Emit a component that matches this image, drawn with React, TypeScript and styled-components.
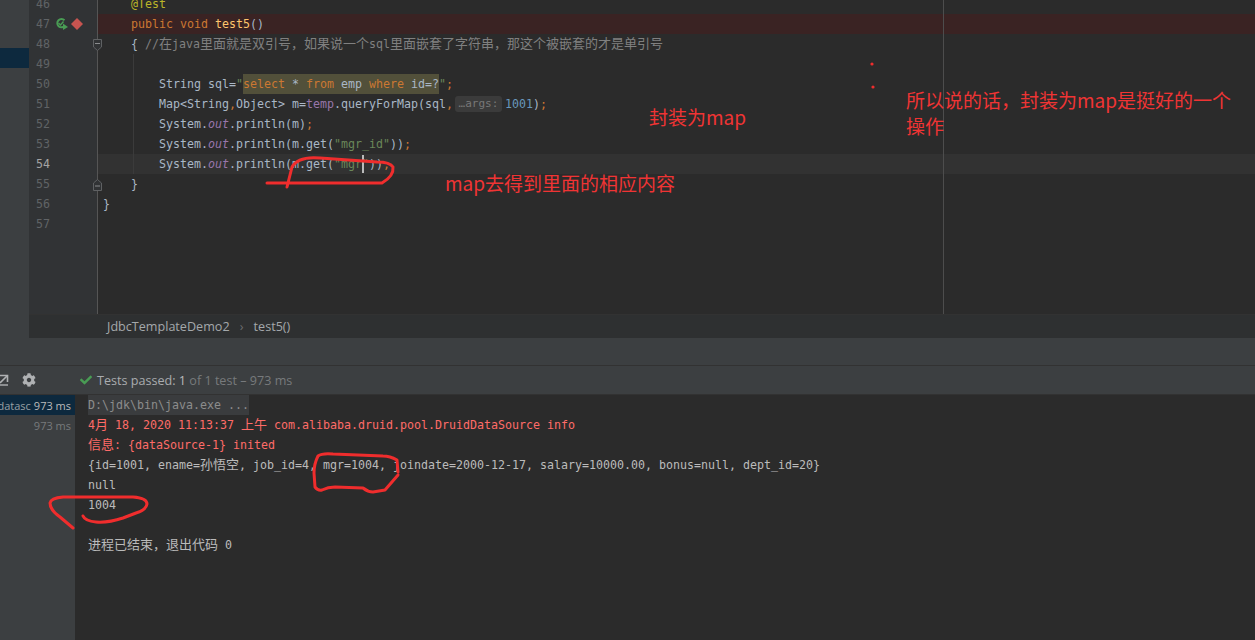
import React, { FC, ReactNode } from 'react'
import styled, { createGlobalStyle } from 'styled-components'
import { FaCheck as CheckIcon, FaCog as GearIcon } from 'react-icons/fa'

const GlobalStyle = createGlobalStyle`
	html, body {
		margin: 0;
		padding: 0;
		background: #2b2b2b;
	}
`

const App: FC = () => {
	return (
		<Page>
			<GlobalStyle />
			<TopArea>
				<LeftRail>
					<RailSelection />
				</LeftRail>
				<EditorColumn>
					<EditorBody>
						<Gutter>
							{lineNumbers.map((n) => (
								<GutterRow key={n}>
									<LineNumber $current={n === 54}>{n}</LineNumber>
									{n === 47 && <RunMarker />}
									{(n === 48 || n === 55) && <FoldMark open={n === 48} />}
								</GutterRow>
							))}
						</Gutter>
						<Code>
							<RightMargin />
							<IndentGuide />
							<CodeLine>
								<Indent $level={1}><Annotation>@Test</Annotation></Indent>
							</CodeLine>
							<CodeLine $tone="breakpoint">
								<Indent $level={1}>
									<Keyword>public void </Keyword>
									<Method>test5</Method>()
								</Indent>
							</CodeLine>
							<CodeLine>
								<Indent $level={1}>
									{'{ '}
									<Comment>
										//<Han>在</Han>java<Han>里面就是双引号，如果说一个</Han>sql
										<Han>里面嵌套了字符串，那这个被嵌套的才是单引号</Han>
									</Comment>
								</Indent>
							</CodeLine>
							<CodeLine />
							<CodeLine>
								<Indent $level={2}>
									String sql=<Str>"</Str>
									<SqlHighlight>
										<Keyword>select</Keyword> * <Keyword>from</Keyword> emp{' '}
										<Keyword>where</Keyword> id=?
									</SqlHighlight>
									<Str>"</Str>
									<Keyword>;</Keyword>
								</Indent>
							</CodeLine>
							<CodeLine>
								<Indent $level={2}>
									Map{'<'}String<Keyword>,</Keyword>Object{'>'} m=<Field>temp</Field>
									.queryForMap(sql<Keyword>,</Keyword>
									<ParamHint>…args:</ParamHint>
									<NumberLit>1001</NumberLit>)<Keyword>;</Keyword>
								</Indent>
							</CodeLine>
							<CodeLine>
								<Indent $level={2}>
									System.<StaticField>out</StaticField>.println(m)<Keyword>;</Keyword>
								</Indent>
							</CodeLine>
							<CodeLine>
								<Indent $level={2}>
									System.<StaticField>out</StaticField>.println(m.get(
									<Str>"mgr_id"</Str>))<Keyword>;</Keyword>
								</Indent>
							</CodeLine>
							<CodeLine $tone="current">
								<Indent $level={2}>
									System.<StaticField>out</StaticField>.println(m.get(
									<Str>"mgr</Str>
									<Caret />
									<Str>"</Str>))<Keyword>;</Keyword>
								</Indent>
							</CodeLine>
							<CodeLine>
								<Indent $level={1}>{'}'}</Indent>
							</CodeLine>
							<CodeLine>
								<Indent $level={0}>{'}'}</Indent>
							</CodeLine>
							<CodeLine />
						</Code>
					</EditorBody>
					<Breadcrumbs>
						<span>JdbcTemplateDemo2</span>
						<CrumbArrow>›</CrumbArrow>
						<span>test5()</span>
					</Breadcrumbs>
				</EditorColumn>
			</TopArea>
			<ToolWindowHeader />
			<RunToolbar>
				<ToolIcons>
					<ExpandIcon />
					<GearSlot>
						<GearIcon size={14} color="#afb1b3" />
					</GearSlot>
				</ToolIcons>
				<TestStatus>
					<CheckIcon size={12} color="#499c54" />
					<StatusText>
						Tests passed: <strong>1</strong> <Dim>of 1 test – 973 ms</Dim>
					</StatusText>
				</TestStatus>
			</RunToolbar>
			<RunBody>
				<TestTree>
					<TreeRow $selected>
						<TreeName>datasc</TreeName>
						<span>973 ms</span>
					</TreeRow>
					<TreeRow>
						<Dim>973 ms</Dim>
					</TreeRow>
				</TestTree>
				<Console>
					<ConsoleLine>
						<CommandText>D:\jdk\bin\java.exe ...</CommandText>
					</ConsoleLine>
					<ConsoleLine $error>
						4<Han>月</Han> 18, 2020 11:13:37 <Han>上午</Han> com.alibaba.druid.pool.DruidDataSource info
					</ConsoleLine>
					<ConsoleLine $error>
						<Han>信息</Han>: {'{'}dataSource-1{'}'} inited
					</ConsoleLine>
					<ConsoleLine>
						{'{'}id=1001, ename=<Han>孙悟空</Han>, job_id=4, mgr=1004, joindate=2000-12-17,
						salary=10000.00, bonus=null, dept_id=20{'}'}
					</ConsoleLine>
					<ConsoleLine>null</ConsoleLine>
					<ConsoleLine>1004</ConsoleLine>
					<ConsoleLine />
					<ConsoleLine>
						<Han>进程已结束，退出代码</Han> 0
					</ConsoleLine>
				</Console>
			</RunBody>
			<Scribbles viewBox="0 0 1255 640">
				<path d="M267 183 L382 183 Q394 176 393 167 Q390 162 377 162 L320 158 Q298 156 292 167 L287 187" />
				<path d="M398 472 L397 460 Q390 456 383 456 L333 454 Q322 453 318 456 Q314 464 314 473 L315 487 Q318 491 322 490 Q328 487 335 487 L363 488 Q368 492 373 492 L385 490 L398 475" />
				<path d="M73 528 L60 517 Q50 510 50 503 Q51 498 63 497 L100 497 L133 497 Q147 498 147 504 Q146 510 136 513 L123 518 Q108 523 96 522 Q85 521 83 516" />
				<Dot cx="872" cy="64" r="1.6" />
				<Dot cx="873" cy="87" r="1.6" />
			</Scribbles>
			<Note $x={649} $y={104}>封装为map</Note>
			<Note $x={445} $y={170}>map去得到里面的相应内容</Note>
			<Note $x={906} $y={87} $width={340}>
				所以说的话，封装为map是挺好的一个
				<br />
				操作
			</Note>
		</Page>
	)
}

export default App

const lineNumbers = [46, 47, 48, 49, 50, 51, 52, 53, 54, 55, 56, 57]

const RunMarker: FC = () => (
	<MarkerSlot>
		<svg width="28" height="14" viewBox="0 0 28 14">
			<path d="M9.5 3.2 A4.2 4.2 0 1 0 9.6 9" fill="none" stroke="#499c54" strokeWidth="2" />
			<path d="M3.5 6 L5.5 8 L8.5 4.5" fill="none" stroke="#499c54" strokeWidth="1.4" />
			<path d="M8 6.5 L13 10 L8 13 Z" fill="#499c54" />
			<path d="M22 1 L28 7 L22 13 L16 7 Z" fill="#c75450" />
		</svg>
	</MarkerSlot>
)

const FoldMark: FC<{ open: boolean }> = ({ open }) => (
	<FoldSlot>
		<svg width="9" height="12" viewBox="0 0 9 12">
			<path
				d={open ? 'M0.5 0.5 H8.5 V8 L4.5 11.5 L0.5 8 Z' : 'M0.5 11.5 H8.5 V4 L4.5 0.5 L0.5 4 Z'}
				fill="#313335"
				stroke="#5f6163"
			/>
			<path d={open ? 'M2 4.5 H7' : 'M2 7 H7'} stroke="#8a8c8e" />
		</svg>
	</FoldSlot>
)

const ExpandIcon: FC = () => (
	<ExpandSlot>
		<svg width="9" height="12" viewBox="0 0 9 12">
			<path d="M0 1.5 H7.5 V8" fill="none" stroke="#afb1b3" strokeWidth="1.6" />
			<path d="M7 2 L0 9" fill="none" stroke="#afb1b3" strokeWidth="1.6" />
			<path d="M0 11 H8" fill="none" stroke="#afb1b3" strokeWidth="1.4" />
		</svg>
	</ExpandSlot>
)

const mono = `"DejaVu Sans Mono", "Noto Sans CJK SC", monospace`
const ui = `"Open Sans", "Liberation Sans", sans-serif`

const Page = styled.div`
	position: relative;
	display: flex;
	flex-direction: column;
	width: 1255px;
	height: 640px;
	overflow: hidden;
	background: #2b2b2b;
	color: #a9b7c6;
	font-family: ${mono};
	font-size: 11.63px;
`

const TopArea = styled.div`
	display: flex;
	height: 338px;
`

const LeftRail = styled.div`
	flex: 0 0 29px;
	padding-top: 48px;
	background: #3c3f41;
`

const RailSelection = styled.div`
	height: 20px;
	background: #0d293e;
`

const EditorColumn = styled.div`
	flex: 1;
	display: flex;
	flex-direction: column;
	min-width: 0;
`

const EditorBody = styled.div`
	flex: 0 0 314px;
	display: flex;
	overflow: hidden;
`

const Gutter = styled.div`
	flex: 0 0 69px;
	background: #313335;
	border-right: 1px solid #555555;
	box-sizing: border-box;
`

const GutterRow = styled.div`
	position: relative;
	top: -6px;
	display: flex;
	align-items: center;
	height: 20px;
	padding-left: 7px;
`

const LineNumber = styled.span<{ $current?: boolean }>`
	width: 14px;
	text-align: right;
	color: ${({ $current }) => ($current ? '#a4a3a3' : '#606366')};
`

const MarkerSlot = styled.span`
	display: flex;
	margin-left: 5px;
`

const FoldSlot = styled.span`
	position: absolute;
	right: -5px;
	top: 5px;
	z-index: 2;
	display: flex;
`

const Code = styled.div`
	position: relative;
	flex: 1;
	min-width: 0;
	margin-top: -6px;
`

const RightMargin = styled.div`
	position: absolute;
	left: 845px;
	top: 0;
	bottom: -6px;
	width: 1px;
	background: #4d4d4d;
`

const IndentGuide = styled.div`
	position: absolute;
	left: 35px;
	top: 60px;
	height: 120px;
	width: 1px;
	background: #3b3b3b;
`

const CodeLine = styled.div<{ $tone?: 'breakpoint' | 'current' }>`
	height: 20px;
	line-height: 20px;
	white-space: pre;
	background: ${({ $tone }) =>
		$tone === 'breakpoint' ? '#3a2323' : $tone === 'current' ? '#323232' : 'transparent'};
`

const Indent = styled.div<{ $level: number }>`
	padding-left: ${({ $level }) => 5 + $level * 28}px;
`

const Keyword = styled.span`
	color: #cc7832;
`

const Method = styled.span`
	color: #ffc66d;
`

const Annotation = styled.span`
	color: #bbb529;
`

const Comment = styled.span`
	color: #808080;
`

const Han = styled.span`
	font-family: "Noto Sans CJK SC", sans-serif;
	font-size: 13px;
	line-height: 0;
`

const Str = styled.span`
	color: #6a8759;
`

const SqlHighlight = styled.span`
	display: inline-block;
	height: 20px;
	background: #52503a;
`

const Field = styled.span`
	color: #9876aa;
`

const StaticField = styled.span`
	color: #9876aa;
	font-style: italic;
`

const NumberLit = styled.span`
	color: #6897bb;
`

const ParamHint = styled.span`
	display: inline-block;
	height: 16px;
	line-height: 15px;
	width: 47px;
	margin: 0 3px 0 2px;
	border-radius: 3px;
	background: #3b3b3b;
	color: #787878;
	font-size: 11px;
	text-align: center;
	vertical-align: 1px;
`

const Caret = styled.span`
	display: inline-block;
	width: 2px;
	height: 18px;
	margin-right: -2px;
	background: #bbbbbb;
	vertical-align: -5px;
`

const Breadcrumbs = styled.div`
	flex: 1;
	display: flex;
	align-items: center;
	padding-left: 78px;
	background: #2e3031;
	border-top: 1px solid #323232;
	color: #a4a8ab;
	font-family: ${ui};
	font-size: 12.6px;
`

const CrumbArrow = styled.span`
	width: 24px;
	text-align: center;
	color: #6b6d6f;
`

const ToolWindowHeader = styled.div`
	flex: 0 0 28px;
	background: #3c3f41;
	border-bottom: 1px solid #323232;
	box-sizing: border-box;
`

const RunToolbar = styled.div`
	flex: 0 0 29px;
	display: flex;
	align-items: center;
	background: #3c3f41;
	border-bottom: 1px solid #323232;
	box-sizing: border-box;
	font-family: ${ui};
	font-size: 12.6px;
`

const ToolIcons = styled.div`
	flex: 0 0 80px;
	display: flex;
	align-items: center;
`

const ExpandSlot = styled.span`
	display: flex;
`

const GearSlot = styled.span`
	display: flex;
	margin-left: 13px;
`

const TestStatus = styled.div`
	display: flex;
	align-items: center;
	gap: 5px;
	color: #a9acaf;
`

const StatusText = styled.span`
	strong {
		font-weight: 400;
		color: #bbbbbb;
	}
`

const Dim = styled.span`
	color: #777a7c;
`

const RunBody = styled.div`
	flex: 1;
	display: flex;
	min-height: 0;
`

const TestTree = styled.div`
	flex: 0 0 75px;
	overflow: hidden;
	background: #3c3f41;
	font-family: ${ui};
	font-size: 11px;
`

const TreeRow = styled.div<{ $selected?: boolean }>`
	display: flex;
	justify-content: flex-end;
	gap: 3px;
	height: 20px;
	line-height: 21px;
	padding-right: 4px;
	white-space: nowrap;
	background: ${({ $selected }) => ($selected ? '#0d293e' : 'transparent')};
	color: #bbbbbb;
`

const TreeName = styled.span`
	color: #9aa0a4;
`

const Console = styled.div`
	flex: 1;
	padding-left: 13px;
	min-width: 0;
`

const ConsoleLine = styled.div<{ $error?: boolean }>`
	height: 20px;
	line-height: 20px;
	white-space: pre-wrap;
	color: ${({ $error }) => ($error ? '#ff6b68' : '#bbbbbb')};
`

const CommandText = styled.span`
	display: inline-block;
	height: 20px;
	background: #3a3c3e;
	color: #8c8c8c;
`

const Scribbles = styled.svg`
	position: absolute;
	left: 0;
	top: 0;
	width: 1255px;
	height: 640px;
	pointer-events: none;
	path {
		fill: none;
		stroke: #f02d2d;
		stroke-width: 3;
		stroke-linecap: round;
		stroke-linejoin: round;
	}
`

const Dot = styled.circle`
	fill: #f02d2d;
`

const Note = styled.div<{ $x: number; $y: number; $width?: number; children?: ReactNode }>`
	position: absolute;
	left: ${({ $x }) => $x}px;
	top: ${({ $y }) => $y}px;
	width: ${({ $width }) => ($width ? `${$width}px` : 'auto')};
	color: #f03434;
	font-family: "Noto Sans CJK SC", sans-serif;
	font-size: 19px;
	line-height: 26px;
	white-space: nowrap;
`
